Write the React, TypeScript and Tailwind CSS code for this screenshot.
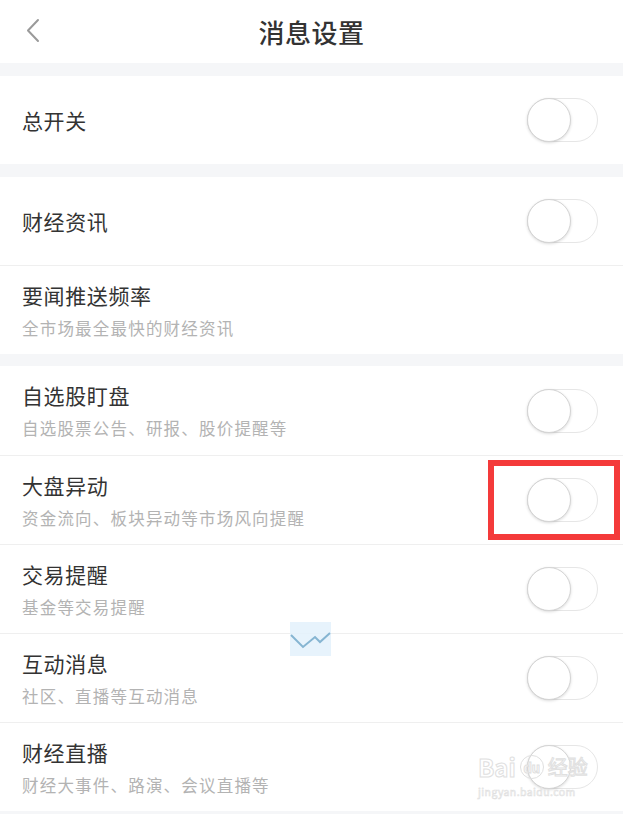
import { ReactNode } from "react";

type Item = {
  title: string;
  desc?: string;
  toggle?: boolean;
  marked?: boolean;
};

const groups: Item[][] = [
  [{ title: "总开关", toggle: true }],
  [
    { title: "财经资讯", toggle: true },
    { title: "要闻推送频率", desc: "全市场最全最快的财经资讯" },
  ],
  [
    { title: "自选股盯盘", desc: "自选股票公告、研报、股价提醒等", toggle: true },
    { title: "大盘异动", desc: "资金流向、板块异动等市场风向提醒", toggle: true, marked: true },
    { title: "交易提醒", desc: "基金等交易提醒", toggle: true },
    { title: "互动消息", desc: "社区、直播等互动消息", toggle: true },
    { title: "财经直播", desc: "财经大事件、路演、会议直播等", toggle: true },
  ],
];

function Toggle() {
  return (
    <div className="relative w-[71px] h-[44px] rounded-full border border-[#e6e6e6] bg-white">
      <div className="absolute left-[-1px] top-[-1px] w-[44px] h-[44px] rounded-full border border-[#d4d4d4] bg-white shadow-[0_1px_3px_rgba(0,0,0,0.15)]" />
    </div>
  );
}

function Band({ h }: { h: string }) {
  return <div className={`${h} bg-[#f5f6f8]`} />;
}

function Row({ item, first }: { item: Item; first: boolean }) {
  const tall = !!item.desc;
  return (
    <div
      className={`relative flex items-center justify-between pl-[22px] pr-[25px] bg-white ${
        first ? "" : "border-t border-[#efefef]"
      } ${tall ? "h-[89px]" : "h-[88px]"}`}
    >
      {tall ? (
        <div className="flex flex-col self-start pt-[15px]">
          <span className="text-[21px] leading-[28px] tracking-[0.6px] text-[#333]">{item.title}</span>
          <span className="mt-[8px] text-[16.5px] leading-[22px] tracking-[1.2px] text-[#b3b3b3]">
            {item.desc}
          </span>
        </div>
      ) : (
        <span className="text-[21px] leading-[28px] tracking-[0.6px] text-[#333]">{item.title}</span>
      )}
      {item.toggle && <Toggle />}
      {item.marked && (
        <div className="absolute left-[488px] top-[4px] w-[132px] h-[80px] border-[6px] border-[#f43a3a]" />
      )}
    </div>
  );
}

function Watermark(): ReactNode {
  return (
    <div className="absolute left-[478px] top-[754px] flex flex-col items-start pointer-events-none">
      <div className="flex items-center gap-[4px] h-[26px] text-white [-webkit-text-stroke:1px_#e0e0e0]">
        <span className="text-[24px] leading-[24px] font-bold">Bai</span>
        <span className="flex items-center justify-center w-[24px] h-[24px] rounded-full border border-[#e0e0e0] text-[13px] leading-[13px] font-bold">
          du
        </span>
        <span className="text-[20px] leading-[22px]">经验</span>
      </div>
      <span className="mt-[6px] text-[10.5px] leading-[11px] text-white [-webkit-text-stroke:0.6px_#e0e0e0] tracking-[0.4px]">
        jingyan.baidu.com
      </span>
    </div>
  );
}

export default function App() {
  return (
    <div
      className="relative w-[623px] h-[814px] overflow-hidden bg-[#f5f6f8]"
      style={{ fontFamily: '"Noto Sans CJK SC", "Noto Sans", sans-serif' }}
    >
      <header className="relative flex items-center justify-center h-[63px] bg-white">
        <svg className="absolute left-[25px] top-[18px]" width="16" height="25" viewBox="0 0 16 25">
          <path d="M13 2 L3 12.5 L13 23" fill="none" stroke="#9a9a9a" strokeWidth="2" strokeLinecap="round" strokeLinejoin="round" />
        </svg>
        <h1 className="text-[26px] leading-[34px] font-medium tracking-[0.5px] text-[#333]">消息设置</h1>
      </header>
      <Band h="h-[13px]" />
      {groups.map((group, gi) => (
        <div key={gi}>
          {group.map((item, i) => (
            <Row key={item.title} item={item} first={i === 0} />
          ))}
          <Band h={gi === 2 ? "h-[6px]" : gi === 1 ? "h-[12px]" : "h-[13px]"} />
        </div>
      ))}
      <svg className="absolute left-[290px] top-[622px]" width="41" height="34" viewBox="0 0 41 34">
        <rect x="0" y="0" width="41" height="34" fill="#e3f1fb" opacity="0.85" />
        <polyline points="1,13 13,25 25,15 30,20 40,11" fill="none" stroke="#86b5d2" strokeWidth="2" />
      </svg>
      <Watermark />
    </div>
  );
}
